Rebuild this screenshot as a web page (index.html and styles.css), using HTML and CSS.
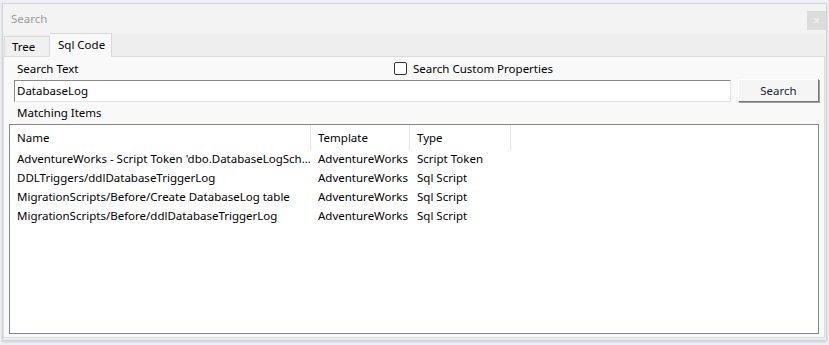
FILE: index.html
```html
<!DOCTYPE html>
<html lang="en">
<head>
    <meta charset="UTF-8">
    <title>Search</title>
    <link rel="stylesheet" href="styles.css">
</head>
<body>
    <div class="window">
        <div class="titlebar">
            <span class="title">Search</span>
            <span class="close">&#x2715;</span>
        </div>
        <div class="tabs">
            <div class="tab">Tree</div>
            <div class="tab active">Sql Code</div>
        </div>
        <div class="panel">
            <div class="row-top">
                <span class="label first">Search Text</span>
                <label class="check"><span class="box"></span>Search Custom Properties</label>
            </div>
            <div class="row-search">
                <div class="textbox">DatabaseLog</div>
                <button class="btn">Search</button>
            </div>
            <div class="label items">Matching Items</div>
            <div class="list">
                <div class="head">
                    <div class="c name">Name</div>
                    <div class="c tmpl">Template</div>
                    <div class="c type">Type</div>
                </div>
                <div class="item">
                    <div class="c name">AdventureWorks - Script Token 'dbo.DatabaseLogSch...</div>
                    <div class="c tmpl">AdventureWorks</div>
                    <div class="c type">Script Token</div>
                </div>
                <div class="item">
                    <div class="c name">DDLTriggers/ddlDatabaseTriggerLog</div>
                    <div class="c tmpl">AdventureWorks</div>
                    <div class="c type">Sql Script</div>
                </div>
                <div class="item">
                    <div class="c name">MigrationScripts/Before/Create DatabaseLog table</div>
                    <div class="c tmpl">AdventureWorks</div>
                    <div class="c type">Sql Script</div>
                </div>
                <div class="item">
                    <div class="c name">MigrationScripts/Before/ddlDatabaseTriggerLog</div>
                    <div class="c tmpl">AdventureWorks</div>
                    <div class="c type">Sql Script</div>
                </div>
            </div>
        </div>
    </div>
</body>
</html>
```
FILE: styles.css
```css
html, body {
    height: 100%;
}

body {
    margin: 0;
    padding: 3px 0 0 2px;
    background-color: #eef0f5;
    font-family: "Noto Sans", "Liberation Sans", sans-serif;
    font-size: 11.5px;
    color: #000;
    box-sizing: border-box;
}

.window {
    width: 825px;
    height: 338px;
    box-sizing: border-box;
    border: 1px solid #d4d4d4;
    background-color: #eeeeee;
    box-shadow: 0 1px 2px rgba(0, 0, 0, 0.15);
    display: flex;
    flex-direction: column;
}

.titlebar {
    height: 30px;
    flex: none;
    background-color: #f3f3f3;
    display: flex;
    align-items: flex-start;
    justify-content: space-between;
}

.title {
    color: #9a9a9a;
    padding-left: 8px;
    line-height: 30px;
}

.close {
    width: 19px;
    height: 19px;
    margin-top: 7px;
    background-color: #dcdcdc;
    color: #f4f4f4;
    font-size: 9px;
    line-height: 19px;
    text-align: center;
}

.tabs {
    height: 22px;
    flex: none;
    display: flex;
    align-items: flex-end;
    padding-left: 1px;
}

.tab {
    height: 20px;
    width: 46px;
    box-sizing: border-box;
    line-height: 20px;
    padding-left: 7px;
    white-space: nowrap;
    border: 1px solid #d9d9d9;
    border-bottom: none;
    background-color: #f0f0f0;
}

.tab.active {
    height: 24px;
    width: 62px;
    padding-left: 8px;
    line-height: 21px;
    border-left: none;
    background-color: #f9f9f9;
    margin-bottom: -1px;
    position: relative;
}

.panel {
    flex: 1;
    margin: 0 1px 2px 0;
    border: 1px solid #dcdcdc;
    background-color: #f9f9f9;
    display: flex;
    flex-direction: column;
    padding-left: 5px;
    padding-right: 5px;
}

.row-top {
    height: 22px;
    display: flex;
    align-items: center;
}

.label {
    padding-left: 8px;
}

.label.first {
    width: 385px;
    box-sizing: border-box;
}

.check {
    display: flex;
    align-items: center;
}

.box {
    width: 11px;
    height: 11px;
    border: 1px solid #333;
    border-radius: 2px;
    background-color: #fff;
    margin-right: 6px;
}

.row-search {
    height: 23px;
    display: flex;
    align-items: center;
}

.textbox {
    width: 713px;
    height: 20px;
    margin-left: 5px;
    padding-left: 2px;
    box-sizing: content-box;
    line-height: 20px;
    background-color: #fff;
    border: 1px solid;
    border-color: #8a8a8a #e3e3e3 #e3e3e3 #8a8a8a;
}

.btn {
    width: 81px;
    height: 23px;
    margin-left: 7px;
    font-family: inherit;
    font-size: 11.5px;
    color: #1b1b3a;
    background-color: #f5f5f5;
    border: 1px solid;
    border-color: #ffffff #777777 #777777 #ffffff;
    box-shadow: 1px 1px 0 #a0a0a0;
    padding: 0;
}

.items {
    height: 22px;
    line-height: 21px;
}

.list {
    flex: 1;
    margin-bottom: 3px;
    background-color: #fff;
    border: 1px solid #828790;
}

.head {
    height: 25px;
    display: flex;
}

.head .c {
    line-height: 25px;
    border-right: 1px solid #e5e5e5;
}

.item {
    height: 19px;
    display: flex;
}

.item .c {
    line-height: 18px;
    border-right: 1px solid transparent;
}

.c {
    padding-left: 7px;
    box-sizing: border-box;
    white-space: nowrap;
    overflow: hidden;
}

.name {
    width: 301px;
}

.tmpl {
    width: 99px;
    overflow: visible;
}

.type {
    width: 101px;
    overflow: visible;
}
```
